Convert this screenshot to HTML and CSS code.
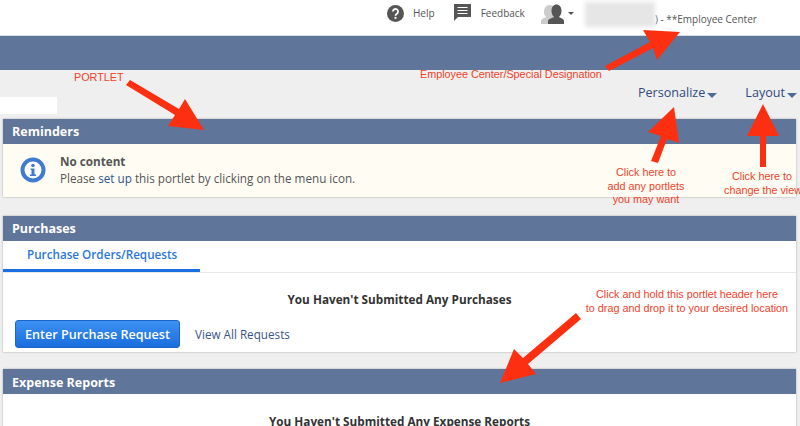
FILE: index.html
```html
<!DOCTYPE html>
<html lang="en">
<head>
<meta charset="utf-8">
<title>Employee Center</title>
<link rel="stylesheet" href="styles.css">
</head>
<body>
<header class="topbar">
  <svg class="ico-help" viewBox="0 0 16 16" width="17" height="17"><circle cx="8" cy="8" r="8" fill="#555"/><path d="M5.6 6.2a2.4 2.4 0 1 1 3.7 2c-.9.6-1.3 1-1.3 1.9" fill="none" stroke="#fff" stroke-width="1.7"/><rect x="7.1" y="11.2" width="1.8" height="1.8" fill="#fff"/></svg>
  <span class="top-link help">Help</span>
  <svg class="ico-feedback" viewBox="0 0 19 19" width="19" height="19"><path d="M1 1h17v13H5l-4 4z" fill="#555"/><path d="M4.500 4.500h10M4.500 7.500h10M4.500 10.500h10" stroke="#fff" stroke-width="1.200"/></svg>
  <span class="top-link feedback">Feedback</span>
  <svg class="ico-user" viewBox="0 0 26 20" width="26" height="20"><path d="M1 20v-3c0-2 3-3 5-4-1.500-1.500-2-3-2-5 0-4 2-7 6-7 2 0 4 1 5 3v16z" fill="#ccc"/><path d="M8 20v-3c0-2 4-3 6-4-1.500-1.500-2.500-3.500-2.500-6 0-4 2-6.500 5-6.500s5 2.500 5 6.500c0 2.500-1 4.500-2.500 6 2 1 5 2 5 4v3z" fill="#555"/></svg>
  <span class="caret-top"></span>
  <span class="blurred"></span>
  <span class="top-link role">) - **Employee Center</span>
</header>
<div class="band"></div>
<div class="toolbar">
  <span class="white-patch"></span>
  <nav class="actions">
    <a class="action personalize">Personalize<span class="caret"></span></a>
    <a class="action">Layout<span class="caret"></span></a>
  </nav>
</div>
<main class="portlets">
  <section class="portlet reminders">
    <h2 class="portlet-head">Reminders</h2>
    <div class="notice">
      <svg class="ico-info" viewBox="0 0 26 26" width="26" height="26"><circle cx="13" cy="13" r="10.500" fill="#fff" stroke="#3f7bd0" stroke-width="4"/><circle cx="13" cy="8.500" r="1.800" fill="#3f7bd0"/><path d="M10.500 11.500h4v6h1.500v1.500h-6v-1.500h1.500v-4.500h-1z" fill="#3f7bd0"/></svg>
      <div class="notice-text">
        <strong>No content</strong>
        <p>Please <a>set up</a> this portlet by clicking on the menu icon.</p>
      </div>
    </div>
  </section>
  <section class="portlet purchases">
    <h2 class="portlet-head">Purchases</h2>
    <div class="tabs"><span class="tab">Purchase Orders/Requests</span></div>
    <div class="portlet-body">
      <h3 class="empty">You Haven't Submitted Any Purchases</h3>
      <div class="row">
        <button class="btn" type="button">Enter Purchase Request</button>
        <a class="view-all">View All Requests</a>
      </div>
    </div>
  </section>
  <section class="portlet expenses">
    <h2 class="portlet-head">Expense Reports</h2>
    <div class="portlet-body">
      <h3 class="empty empty-exp">You Haven't Submitted Any Expense Reports</h3>
    </div>
  </section>
</main>
<svg class="arrows" viewBox="0 0 800 426" width="800" height="426">
  <path fill="#fc3011" d="M605 66 650 42 643 30 680 32 657 60 653 48 609 71z"/>
  <path fill="#fc3011" d="M130 80 179 109 185 99 204 130 168 126 175 115 126 85z"/>
  <path fill="#fc3011" d="M651 161 661 136 648 132 674 107 679 143 667 139 658 163z"/>
  <path fill="#fc3011" d="M760 167V136H747L763 104 779 136H766V167z"/>
  <path fill="#fc3011" d="M576 313 523 358 514 349 500 383 536 374 528 364 581 319z"/>
</svg>
<span class="note n-emp">Employee Center/Special Designation</span>
<span class="note n-portlet">PORTLET</span>
<span class="note n-pers">Click here to<br>add any portlets<br>you may want</span>
<span class="note n-layout">Click here to<br>change the view</span>
<span class="note n-drag">Click and hold this portlet header here<br>to drag and drop it to your desired location</span>
</body>
</html>
```
FILE: styles.css
```css
* { box-sizing: border-box; }
html, body {
  margin: 0;
  width: 800px;
  height: 426px;
  overflow: hidden;
}
body {
  position: relative;
  background: #efefef;
  font-family: "Open Sans", sans-serif;
  color: #444;
}
.topbar {
  height: 36px;
  background: #fff;
  display: flex;
  align-items: flex-start;
  padding: 4px 0 0 387px;
  border-bottom: 1px solid #d5dbe3;
}
.top-link { font-size: 10px; line-height: 14px; color: #555; }
.ico-help { margin-top: 1px; }
.help { margin: 2px 0 0 9px; }
.ico-feedback { margin: -1px 0 0 18px; }
.feedback { margin: 2px 0 0 9px; }
.ico-user { margin: 0 0 0 15px; }
.caret-top {
  width: 0; height: 0;
  margin: 8px 0 0 2px;
  border-left: 3px solid transparent;
  border-right: 3px solid transparent;
  border-top: 3px solid #555;
}
.blurred {
  width: 70px;
  height: 25px;
  margin: -2px 0 0 11px;
  background: #e6e6e6;
  filter: blur(2px);
}
.role { margin-top: 8px; }
.band { height: 34px; background: #5f7599; }
.toolbar {
  height: 49px;
  position: relative;
  display: flex;
  justify-content: flex-end;
}
.white-patch {
  position: absolute;
  left: 0;
  top: 27px;
  width: 57px;
  height: 17px;
  background: #fff;
}
.actions { display: flex; padding: 14px 3px 0 0; }
.action { font-size: 12.600px; line-height: 18px; color: #2f4a80; }
.personalize { margin-right: 28px; }
.caret {
  display: inline-block;
  margin-left: 2px;
  vertical-align: -1px;
  border-left: 5px solid transparent;
  border-right: 5px solid transparent;
  border-top: 5px solid #4f6a94;
}
.portlets {
  margin: 0 4px 0 3px;
  display: flex;
  flex-direction: column;
}
.portlet {
  background: #fff;
  box-shadow: 0 0 2px rgba(0, 0, 0, .3);
}
.portlet-head {
  margin: 0;
  height: 25px;
  padding-left: 9px;
  background: #5f7599;
  color: #fff;
  font-size: 12.500px;
  font-weight: 700;
  line-height: 25px;
}
.expenses .portlet-head { line-height: 27px; }
.reminders { height: 78px; margin-bottom: 19px; background: #fffdf3; }
.notice { display: flex; padding: 13px 0 0 17px; }
.ico-info { flex: none; }
.notice-text { margin: -4px 0 0 14px; font-size: 11.700px; line-height: 16.500px; color: #555; }
.notice-text strong { display: block; font-weight: 700; }
.notice-text p { margin: 0; }
.notice-text a { color: #2a5590; }
.purchases { height: 136px; margin-bottom: 17px; }
.tabs { height: 32px; border-bottom: 1px solid #e8e8e8; }
.tab {
  display: block;
  width: 197px;
  height: 31px;
  padding-left: 24px;
  border-bottom: 3px solid #1c6fe0;
  color: #2b76dc;
  font-size: 11.700px;
  font-weight: 600;
  line-height: 27px;
}
.portlet-body { display: flex; flex-direction: column; }
.empty {
  margin: 18px 0 0;
  text-align: center;
  font-size: 11.750px;
  font-weight: 700;
  line-height: 16px;
  color: #333;
}
.row { display: flex; align-items: center; margin: 13px 0 0 12px; }
.btn {
  width: 165px;
  height: 28px;
  padding: 0;
  border: 1px solid #1d66c8;
  border-radius: 3px;
  background: linear-gradient(#3b92f3, #1a6ddd);
  color: #fff;
  font-family: inherit;
  font-size: 12.600px;
  font-weight: 600;
}
.view-all { margin-left: 15px; font-size: 11.700px; color: #3a5585; }
.empty-exp { margin-top: 19px; }
.arrows { position: absolute; left: 0; top: 0; pointer-events: none; }
.note {
  position: absolute;
  font-family: "Liberation Sans", Arial, sans-serif;
  font-size: 10.800px;
  line-height: 13.500px;
  color: #f0412a;
  text-align: center;
  white-space: nowrap;
}
.n-emp { left: 420px; top: 68px; }
.n-portlet { left: 74px; top: 71px; }
.n-pers { left: 606px; top: 166px; width: 80px; }
.n-layout { left: 724px; top: 170px; width: 76px; overflow: hidden; }
.n-drag { left: 584px; top: 288px; width: 206px; }
```
